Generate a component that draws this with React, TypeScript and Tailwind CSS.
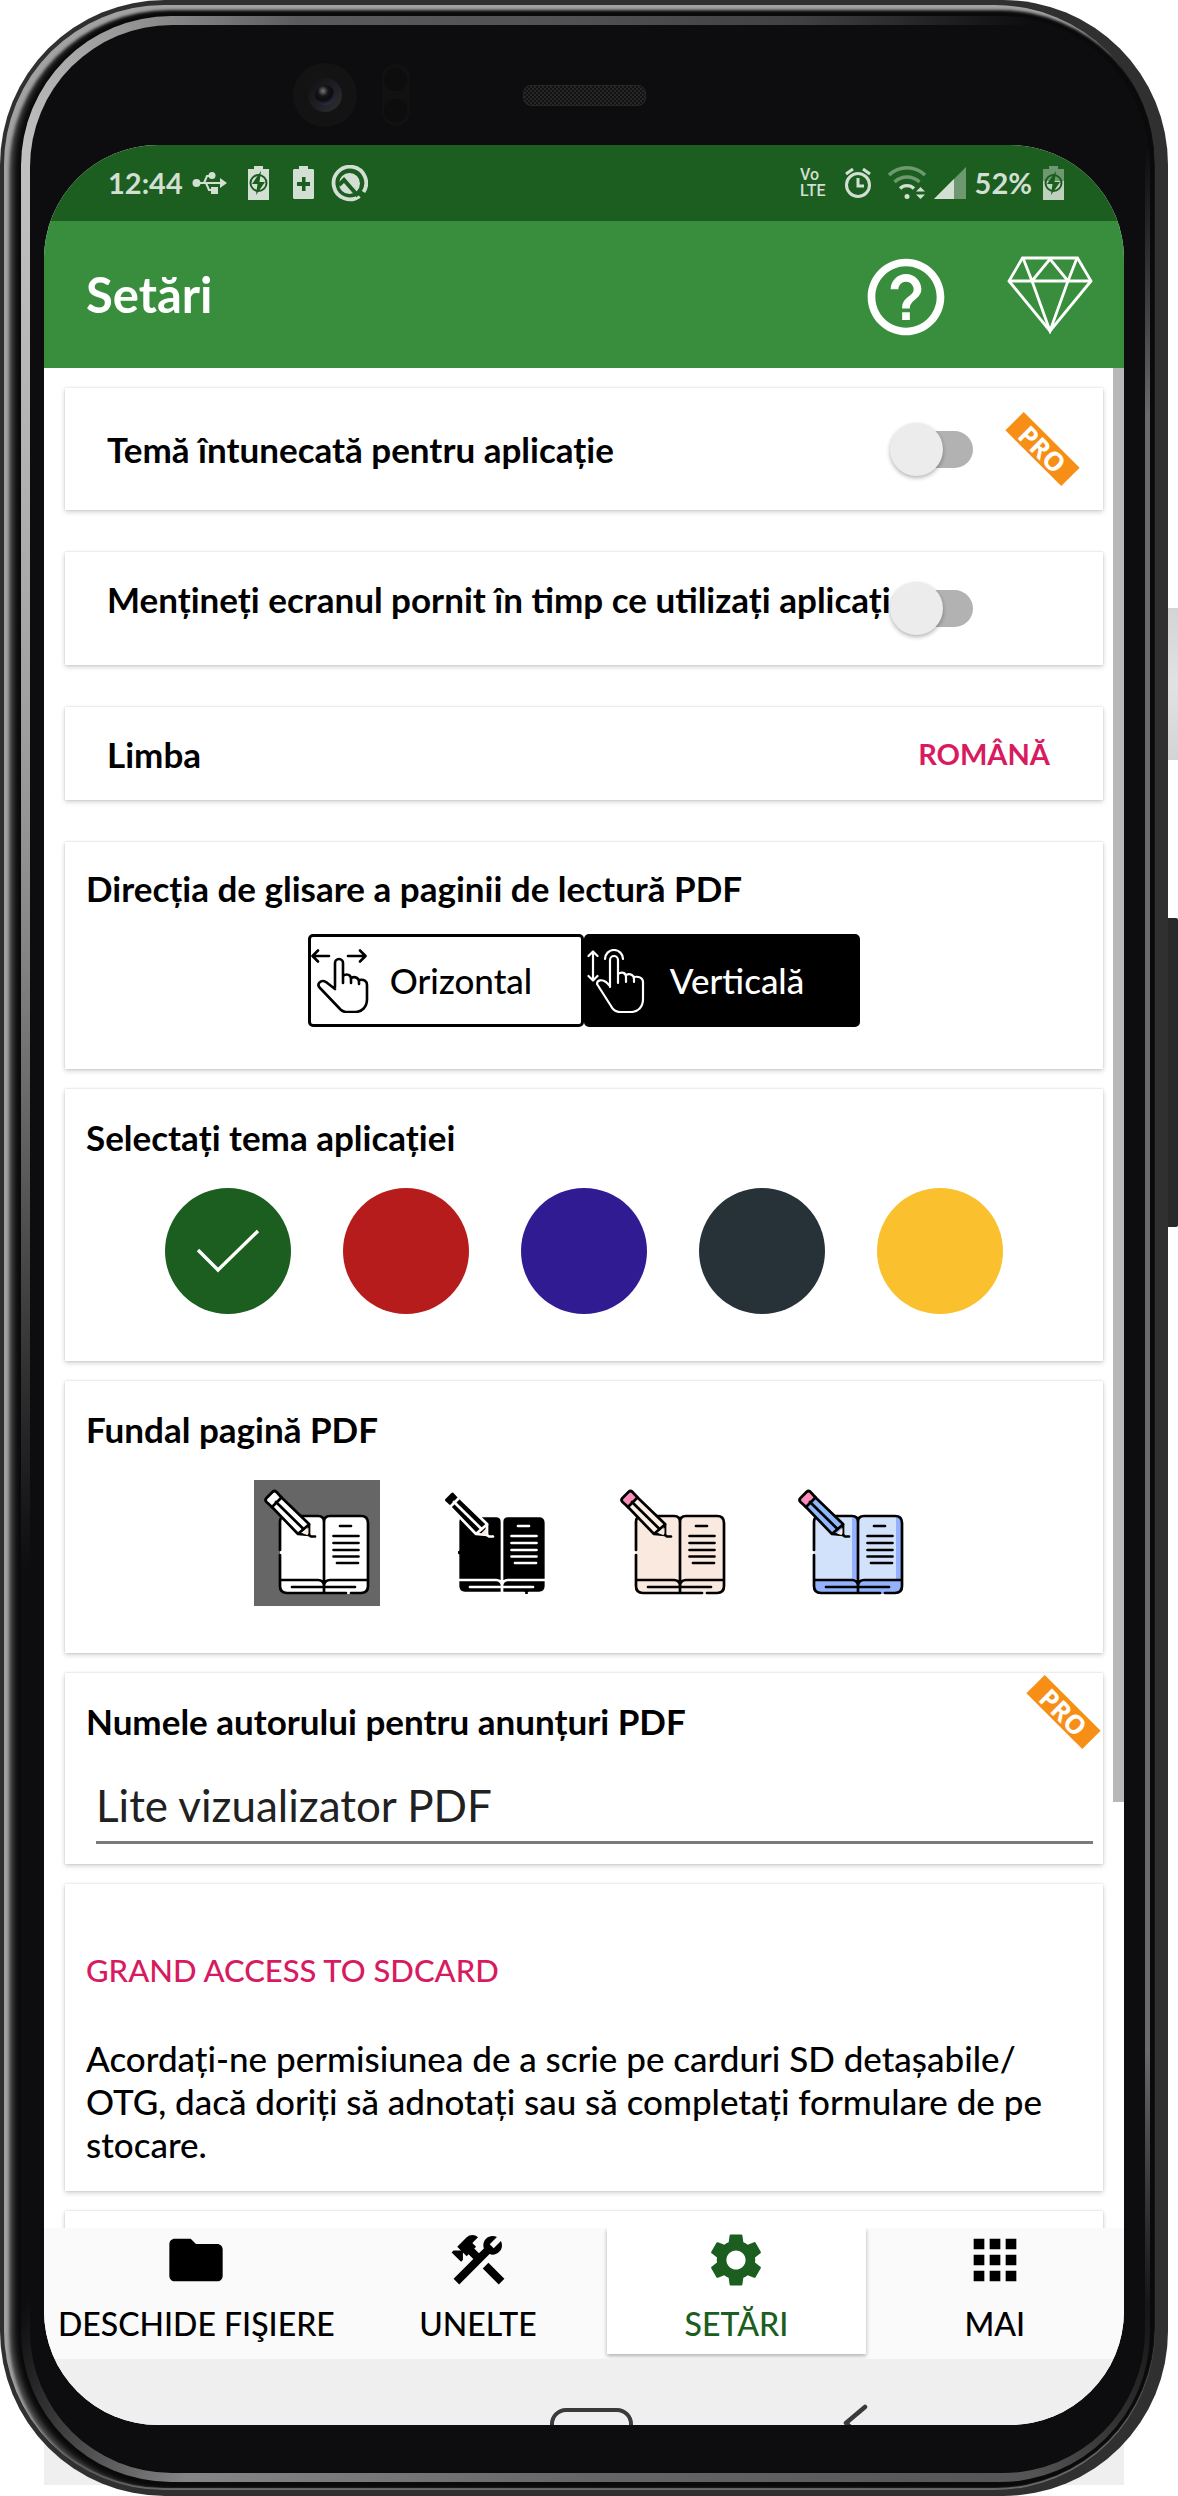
import React, { useState } from "react";
import { MdApps, MdConstruction, MdFolder, MdHelpOutline, MdSettings } from "react-icons/md";

const STATUS = "#d2dfd2";
const CARD =
  "bg-white shadow-[0_2px_5px_rgba(0,0,0,0.18),0_0_2px_rgba(0,0,0,0.14)]";
const HEADING = "text-[35px] leading-10 font-bold text-black";

function UsbIcon() {
  return (
    <svg width="36" height="24" viewBox="0 0 36 24" fill="none" stroke={STATUS} strokeWidth="2">
      <path d="M4 12H29M12 12l3-7h4M14 12l3 7h3" />
      <circle cx="4.500" cy="12" r="4" fill={STATUS} stroke="none" />
      <circle cx="20" cy="4.500" r="3.500" fill={STATUS} stroke="none" />
      <path d="M19 16h7v7h-7zM28 7l7 5-7 5z" fill={STATUS} stroke="none" />
    </svg>
  );
}

function BatteryBolt({ faded = false }: { faded?: boolean }) {
  return (
    <svg width="21" height="34" viewBox="0 0 21 34">
      <path d="M0 3h6V0h9v3h6v31H0z" fill={STATUS} opacity={faded ? 0.45 : 1} />
      {faded && <path d="M0 15h21v19H0z" fill={STATUS} opacity="0.8" />}
      <circle cx="10.500" cy="17" r="8" fill="none" stroke="#1b5e20" strokeWidth="2" />
      <path d="M13 5 4 18h5.500L8 29l9-13h-5.500z" fill="#1b5e20" />
    </svg>
  );
}

function BatteryPlus() {
  return (
    <svg width="21" height="34" viewBox="0 0 21 34">
      <path d="M1 3h5V0h9v3h5l1 1v28l-1 1H1l-1-1V4z" fill={STATUS} />
      <path d="M9 11h3.500v5H17v4h-4.500v5H9v-5H4v-4h5z" fill="#1b5e20" />
    </svg>
  );
}

function CircleTool() {
  return (
    <svg width="37" height="37" viewBox="0 0 37 37">
      <path d="M28.500 31.200A16.300 16.300 0 1 1 32.500 27" fill="none" stroke={STATUS} strokeWidth="3.800" />
      <circle cx="18.500" cy="18.500" r="10.500" fill={STATUS} />
      <path d="M8 20l5-5L27 31" fill="none" stroke="#1b5e20" strokeWidth="4" />
    </svg>
  );
}

function AlarmIcon() {
  return (
    <svg width="28" height="30" viewBox="0 0 28 30" fill="none" stroke={STATUS} strokeWidth="3">
      <circle cx="14" cy="17" r="11.500" />
      <path d="M14 10v8h6M2 6l7-5M26 6l-7-5" />
    </svg>
  );
}

function WifiIcon() {
  return (
    <svg width="38" height="34" viewBox="0 0 38 34" fill="none" stroke={STATUS} strokeWidth="3.400">
      <path d="M1 9a26 26 0 0 1 36 0M6.500 16a18 18 0 0 1 25 0" opacity="0.45" />
      <path d="M12 22.500a10 10 0 0 1 14 0" />
      <circle cx="19" cy="30.500" r="2.500" fill={STATUS} stroke="none" />
      <path d="M28 25.500l4.500-4.500 4.500 4.500zM28 28.500l4.500 4.500 4.500-4.500z" fill={STATUS} stroke="none" />
    </svg>
  );
}

function SignalIcon() {
  return (
    <svg width="32" height="32" viewBox="0 0 32 32" fill={STATUS}>
      <path d="M32 0v32H0z" opacity="0.45" />
      <path d="M20 12v20H0z" />
    </svg>
  );
}

function Diamond() {
  return (
    <svg width="86" height="78" viewBox="0 0 86 78" fill="none" stroke="#fff" strokeWidth="2.800">
      <path d="M15.500 2h55L84 25 43 75 2 25z" />
      <path d="M2 25h82M16 2l9 23L43 3l18 22 9-23M25 25l18 50 18-50" />
    </svg>
  );
}

function SwipeHorizontal() {
  return (
    <svg width="58" height="64" viewBox="0 0 58 64" fill="none" stroke="currentColor" strokeWidth="2.600" strokeLinecap="round" strokeLinejoin="round">
      <path d="M18 7H2M7 1.500 1.500 7 7 12.500M37 7h17M49 1.500 54.500 7 49 12.500" />
      <path d="M24 38V14a4 4 0 0 1 8 0v20M32 27c4-3 8-1 8 3v4M40 29c4-2 8 0 8 4v2M48 31c5-1 8 1 8 5v14c0 8-5 13-12 13h-9c-2 0-4-1-5.500-2.500L9 39c-4-4 1-9 6-6l9 7" />
    </svg>
  );
}

function SwipeVertical() {
  return (
    <svg width="58" height="64" viewBox="0 0 58 64" fill="none" stroke="currentColor" strokeWidth="2.200" strokeLinecap="round" strokeLinejoin="round">
      <path d="M6 3v28M1.500 7 6 2.500 10.500 7M1.500 27 6 31.500 10.500 27" />
      <path d="M18 10a9 9 0 0 1 18 0" />
      <path d="M23 38V11a4 4 0 0 1 8 0v23M31 25c4-3 8-1 8 3v5M39 26c4-2 8 0 8 4v3M47 28c5-1 9 1 9 5v17c0 8-5 13-12 13H33c-4 0-7-2-9-6L10 35c0-4 5-5 9-2l4 4" />
    </svg>
  );
}

type BookColors = { page: string; shade: string; base: string; line: string; detail: string; pencil: string; eraser: string };

function BookIcon({ page, shade, base, line, detail, pencil, eraser }: BookColors) {
  return (
    <svg width="126" height="126" viewBox="0 0 126 126" fill="none" strokeWidth="2.700" strokeLinecap="round" strokeLinejoin="round">
      <path d="M26 36h39q5 0 5 5 0-5 5-5h33q6 0 6 6v58H26z" fill={page} />
      <path d="M64 37q5 0 6 5v57h-6zM108 37q5 0 5 5v57h-5z" fill={shade} />
      <path d="M26 100h88v7q0 7-7 7H33q-7 0-7-7z" fill={base} />
      <path
        d="M26 70V42q0-6 6-6h32q6 0 6 6 0-6 6-6h31q7 0 7 7v63q0 7-7 7H97M92 113H33q-7 0-7-7V75M70 42v71M26 100h38q5 0 6 5 1-5 6-5h38"
        stroke={line}
      />
      <path d="M38 107h63M86 46h11M79.500 56h25M79.500 63h25M79.500 70h25M79.500 76.500h25M83 83h21" stroke={detail} />
      <path d="M17 26 27 17 55 44v11l-11-1z" fill={pencil} stroke={line} />
      <path d="M12.500 22q-2-2 0-4l6-6q2-2 4 0l5 5.500-9.500 9.500z" fill={eraser} stroke={line} />
      <path d="M22 22l27.500 27" stroke={line} />
      <path d="M49 53.500 54.500 48v7.500z" fill="#fbe9e0" />
      <path d="M44.500 53.500 55 44.500M55 55l2 1.500h4" stroke={line} />
    </svg>
  );
}

const BOOKS: { name: string; colors: BookColors }[] = [
  { name: "Alb", colors: { page: "#fff", shade: "#fff", base: "#fff", line: "#000", detail: "#000", pencil: "#fff", eraser: "#fff" } },
  { name: "Negru", colors: { page: "#000", shade: "#000", base: "#000", line: "#fff", detail: "#fff", pencil: "#000", eraser: "#000" } },
  { name: "Sepia", colors: { page: "#f9e9df", shade: "#f9e9df", base: "#f9e9df", line: "#000", detail: "#000", pencil: "#fdeee4", eraser: "#fb8db8" } },
  { name: "Albastru", colors: { page: "#d2e2fa", shade: "#93b1fc", base: "#93b1fc", line: "#000", detail: "#000", pencil: "#8fb8fb", eraser: "#fb8db8" } },
];

const THEMES = [
  { name: "Verde", bg: "bg-[#1b5e20]" },
  { name: "Roșu", bg: "bg-[#b71c1c]" },
  { name: "Indigo", bg: "bg-[#311b92]" },
  { name: "Gri", bg: "bg-[#263238]" },
  { name: "Galben", bg: "bg-[#fbc02d]" },
];

const TABS = [
  { label: "DESCHIDE FIŞIERE", Icon: MdFolder, wide: true },
  { label: "UNELTE", Icon: MdConstruction },
  { label: "SETĂRI", Icon: MdSettings },
  { label: "MAI", Icon: MdApps },
];

function ProBadge() {
  return (
    <span className="flex size-[74px] shrink-0 items-center justify-center">
      <span className="flex h-[26px] w-[79px] shrink-0 rotate-45 items-center justify-center bg-[#f78f16] font-['Open_Sans',sans-serif] text-[26px] leading-none font-bold text-white">
        PRO
      </span>
    </span>
  );
}

function Toggle({ id }: { id: string }) {
  return (
    <input
      id={id}
      type="checkbox"
      role="switch"
      className="relative h-[53px] w-[83px] shrink-0 cursor-pointer appearance-none before:absolute before:top-2 before:right-0 before:h-[37px] before:w-[70px] before:rounded-full before:bg-[#b2b2b2] after:absolute after:top-0 after:left-0 after:size-[53px] after:rounded-full after:bg-[#ececec] after:shadow-[0_2px_4px_rgba(0,0,0,0.3)] checked:after:left-[30px]"
    />
  );
}

export default function App() {
  const [vertical, setVertical] = useState(true);
  const [theme, setTheme] = useState(0);
  const [book, setBook] = useState(0);
  const [tab, setTab] = useState(2);

  return (
    <div className="relative isolate h-screen bg-white pr-[10px] font-['Lato',sans-serif]">
      <div className="absolute right-[54px] bottom-[11px] left-[44px] -z-10 h-40 bg-[#efefef]" />
      <div className="absolute top-[608px] right-0 h-[152px] w-[10px] bg-gradient-to-b from-[#d4d4d4] via-[#e2e2e2] to-[#d4d4d4]" />
      <div className="absolute top-[918px] right-0 h-[309px] w-[10px] rounded-r-xs bg-[#292929]" />

      {/* device shell */}
      <div className="h-full rounded-[165px] bg-[#303030] pt-[5px] pr-[13px] pb-[6px] pl-1">
        <div className="h-full rounded-[160px] bg-[#0a0a0a] pt-[11px] pr-[5px] pb-[8px] pl-[17px] shadow-[inset_5px_5px_3px_0_#a2a2a2,inset_9px_2px_6px_0_#555,inset_0_-2px_1px_0_#707070]">
          <div className="h-full rounded-[150px] bg-[conic-gradient(#505050_0deg,#404040_10deg,#0d0d0f_20deg,#0d0d0f_27deg,#6a6a6a_34deg,#6a6a6a_145deg,#161617_152deg,#555_160deg,#666_180deg,#858585_198deg,#0d0d0f_208deg,#0d0d0f_240deg,#888_300deg,#c0c0c0_333deg,#999_339deg,#5a5a5a_347deg,#505050_360deg)] pt-[9px] pr-[5px] pb-[9px] pl-[9px]">
            <div className="flex h-full flex-col rounded-[142px] bg-[#0d0d0f] pr-[21px] pb-[48px] pl-[14px]">
              <div className="grid h-[120px] shrink-0 grid-cols-[1fr_auto_1fr] items-center pt-5">
                <div className="flex items-center justify-end gap-[25px] pr-[113px]">
                  <div className="flex size-16 items-center justify-center rounded-full bg-[#131314]">
                    <div className="flex size-[34px] items-center justify-center rounded-full bg-gradient-to-br from-[#101012] to-[#2e2e34]">
                      <div className="size-5 rounded-full bg-[radial-gradient(circle_at_40%_30%,#777_0,#15151a_28%,#0c0c10_50%,#2d3350_80%)]" />
                    </div>
                  </div>
                  <div className="flex h-[62px] w-7 flex-col items-center justify-between rounded-full bg-[#111112] py-1">
                    <div className="size-[23px] rounded-full bg-[#0d0d0e]" />
                    <div className="size-[23px] rounded-full bg-[#0d0d0e]" />
                  </div>
                </div>
                <div className="h-[21px] w-[123px] rounded-lg border border-[#262626] bg-[#1a1a1a] bg-[repeating-conic-gradient(#262626_0_25%,#121212_0_50%)] bg-size-[4px_4px]" />
                <div />
              </div>

              {/* screen */}
              <div className="flex min-h-0 flex-1 flex-col overflow-hidden rounded-[114px] bg-white">
                <div className="flex h-[76px] shrink-0 items-center justify-between bg-[#1b5e20] pr-[60px] pl-16 text-[29px] font-bold text-[#d2dfd2]">
                  <div className="flex items-center">
                    <span className="w-[84px]">12:44</span>
                    <UsbIcon />
                    <span className="ml-5"><BatteryBolt /></span>
                    <span className="ml-[24px]"><BatteryPlus /></span>
                    <span className="ml-[17px]"><CircleTool /></span>
                  </div>
                  <div className="flex items-center">
                    <span className="mr-[18px] flex flex-col font-['Roboto',sans-serif] text-[16px] leading-4 font-medium">
                      <span>Vo</span>
                      <span>LTE</span>
                    </span>
                    <AlarmIcon />
                    <span className="ml-4"><WifiIcon /></span>
                    <span className="ml-2"><SignalIcon /></span>
                    <span className="mr-[11px] ml-[9px]">52%</span>
                    <BatteryBolt faded />
                  </div>
                </div>

                <header className="flex h-[147px] shrink-0 items-center bg-[#388e3c] pr-[31px] pl-[42px] text-white">
                  <h1 className="flex-1 text-[49px] leading-none font-bold">Setări</h1>
                  <button type="button" aria-label="Ajutor" className="mr-[55px] pt-1">
                    <MdHelpOutline size={92} />
                  </button>
                  <button type="button" aria-label="Premium"><Diamond /></button>
                </header>

                <div className="relative min-h-0 flex-1 overflow-hidden">
                  <div className="absolute top-0 right-0 z-10 h-[1434px] w-[11px] bg-[#b8b8b8]" />
                  <main className="flex flex-col gap-5 pt-5 pr-[21px] pl-[21px]">
                    <section className={`${CARD} mb-[22px] flex h-[122px] items-center pl-[42px]`}>
                      <label htmlFor="dark" className={`${HEADING} flex-1`}>Temă întunecată pentru aplicație</label>
                      <Toggle id="dark" />
                      <span className="flex w-[130px] justify-center pl-2"><ProBadge /></span>
                    </section>

                    <section className={`${CARD} mb-[22px] flex h-[113px] items-center pl-[42px]`}>
                      <label htmlFor="awake" className={`${HEADING} min-w-0 flex-1 pb-5 whitespace-nowrap`}>
                        Mențineți ecranul pornit în timp ce utilizați aplicația
                      </label>
                      <Toggle id="awake" />
                      <span className="w-[130px]" />
                    </section>

                    <section className={`${CARD} mb-[22px] flex h-[93px] items-center justify-between pr-[53px] pl-[42px]`}>
                      <h2 className={HEADING}>Limba</h2>
                      <button type="button" className="text-[29px] leading-10 font-bold text-[#d81b60]">ROMÂNĂ</button>
                    </section>

                    <section className={`${CARD} px-[21px] pt-[26px] pb-[42px]`}>
                      <h2 className={HEADING}>Direcția de glisare a paginii de lectură PDF</h2>
                      <div className="mt-[26px] flex justify-center">
                        <button
                          type="button"
                          aria-pressed={!vertical}
                          onClick={() => setVertical(false)}
                          className={`flex h-[93px] w-[276px] items-center rounded-[5px] border-[3px] border-black text-[35px] font-medium ${vertical ? "bg-white text-black" : "bg-black text-white"}`}
                        >
                          <SwipeHorizontal />
                          <span className="flex-1 text-center">Orizontal</span>
                          <span className="w-7" />
                        </button>
                        <button
                          type="button"
                          aria-pressed={vertical}
                          onClick={() => setVertical(true)}
                          className={`flex h-[93px] w-[276px] items-center rounded-[5px] border-[3px] border-black text-[35px] font-medium ${vertical ? "bg-black text-white" : "bg-white text-black"}`}
                        >
                          <SwipeVertical />
                          <span className="flex-1 text-center">Verticală</span>
                          <span className="w-7" />
                        </button>
                      </div>
                    </section>

                    <section className={`${CARD} px-[21px] pt-7 pb-[47px]`}>
                      <h2 className={HEADING}>Selectați tema aplicației</h2>
                      <div className="mt-[31px] flex justify-center gap-[52px]">
                        {THEMES.map((t, i) => (
                          <button
                            key={t.name}
                            type="button"
                            aria-label={t.name}
                            aria-pressed={theme === i}
                            onClick={() => setTheme(i)}
                            className={`flex size-[126px] items-center justify-center rounded-full ${t.bg}`}
                          >
                            {theme === i && (
                              <svg width="64" height="44" viewBox="0 0 64 44" fill="none" stroke="#fff" strokeWidth="3.400">
                                <path d="M2 21l20 20L62 2" />
                              </svg>
                            )}
                          </button>
                        ))}
                      </div>
                    </section>

                    <section className={`${CARD} px-[21px] pt-7 pb-[47px]`}>
                      <h2 className={HEADING}>Fundal pagină PDF</h2>
                      <div className="mt-[31px] flex justify-center gap-[52px]">
                        {BOOKS.map((b, i) => (
                          <button
                            key={b.name}
                            type="button"
                            aria-label={b.name}
                            aria-pressed={book === i}
                            onClick={() => setBook(i)}
                            className={book === i ? "bg-[#666]" : ""}
                          >
                            <BookIcon {...b.colors} />
                          </button>
                        ))}
                      </div>
                    </section>

                    <section className={`${CARD} relative pt-7 pb-5`}>
                      <label htmlFor="author" className={`${HEADING} block px-[21px]`}>Numele autorului pentru anunțuri PDF</label>
                      <span className="absolute top-[2px] right-[3px]"><ProBadge /></span>
                      <div className="mt-[35px] pr-[10px] pl-[31px]">
                        <input
                          id="author"
                          type="text"
                          defaultValue="Lite vizualizator PDF"
                          className="block h-[68px] w-full border-b-[3px] border-[#7a7a7a] pb-[8px] text-[44px] text-[#212121] outline-none"
                        />
                      </div>
                    </section>

                    <section className={`${CARD} px-[21px] pt-[66px] pb-[25px]`}>
                      <button type="button" className="block text-[31px] leading-10 font-medium text-[#d81b60]">GRAND ACCESS TO SDCARD</button>
                      <p className="mt-[47px] text-[35px] leading-[43px] font-medium text-black">
                        Acordați-ne permisiunea de a scrie pe carduri SD detașabile/
                        <br />
                        OTG, dacă doriți să adnotați sau să completați formulare de pe stocare.
                      </p>
                    </section>

                    <section className={`${CARD} h-[120px]`} />
                  </main>
                </div>

                <nav className="flex h-[131px] shrink-0 bg-[#fafafa]">
                  {TABS.map(({ label, Icon, wide }, i) => (
                    <button
                      key={label}
                      type="button"
                      onClick={() => setTab(i)}
                      className={`mb-[5px] flex flex-col items-center text-[32px] leading-10 font-medium whitespace-nowrap ${wide ? "px-[14px]" : "flex-1"} ${tab === i ? "bg-white text-[#1b5e20] shadow-[0_2px_4px_rgba(0,0,0,0.3)]" : "text-black"}`}
                    >
                      <Icon size={64} />
                      <span className="mt-3">{label}</span>
                    </button>
                  ))}
                </nav>

                <div className="relative h-[66px] shrink-0 overflow-hidden bg-[#efefef]">
                  <svg className="mx-auto h-[66px] w-[100px]" viewBox="0 0 100 66" fill="none" stroke="#3a3a3a" strokeWidth="4">
                    <rect x="18" y="51" width="79" height="40" rx="14" />
                  </svg>
                  <svg className="absolute top-0 left-[74%] h-[66px] w-10" viewBox="0 0 40 66" fill="none" stroke="#3a3a3a" strokeWidth="4.500" strokeLinecap="round" strokeLinejoin="round">
                    <path d="M22 48 3 64l19 18" />
                  </svg>
                </div>
              </div>
            </div>
          </div>
        </div>
      </div>
    </div>
  );
}
